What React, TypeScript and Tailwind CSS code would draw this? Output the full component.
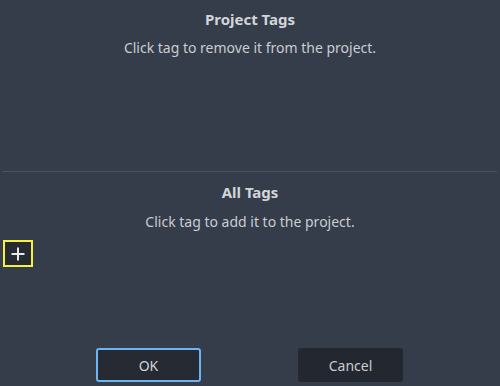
import React from "react";

const App: React.FC = () => {
  return (
    <div
      className="w-[500px] h-[386px] bg-[#363d4a] flex flex-col text-[14px] text-[#c9ccd2] overflow-hidden"
      style={{ fontFamily: '"Noto Sans", "DejaVu Sans", sans-serif' }}
    >
      <div className="h-[171px] flex flex-col items-center pt-[9px]">
        <h1 className="font-bold text-[15px] leading-[20px] text-[#d2d5da]">Project Tags</h1>
        <p className="mt-[9px] leading-[20px]">Click tag to remove it from the project.</p>
      </div>
      <div className="mx-[3px] h-px bg-[#4b5262]" />
      <div className="flex flex-col items-center pt-[10px]">
        <h2 className="font-bold text-[15px] leading-[20px] text-[#d2d5da]">All Tags</h2>
        <p className="mt-[10px] leading-[20px]">Click tag to add it to the project.</p>
      </div>
      <div className="pl-[3px] mt-[8px]">
        <button className="w-[30px] h-[27px] border-2 border-[#f5f23c] bg-[#252a33] flex items-center justify-center">
          <svg width="16" height="16" viewBox="0 0 16 16">
            <path d="M8 1.5v13M1.5 8h13" stroke="#e6e8eb" strokeWidth="2" fill="none" />
          </svg>
        </button>
      </div>
      <div className="flex-1" />
      <div className="flex gap-[97px] pl-[96px] pb-[4px]">
        <button className="w-[105px] h-[34px] rounded-[3px] border-2 border-[#6cb5f2] bg-[#252a33] text-[#d0d3d8]">
          OK
        </button>
        <button className="w-[105px] h-[34px] rounded-[3px] bg-[#222730] text-[#c9ccd2]">
          Cancel
        </button>
      </div>
    </div>
  );
};

export default App;
